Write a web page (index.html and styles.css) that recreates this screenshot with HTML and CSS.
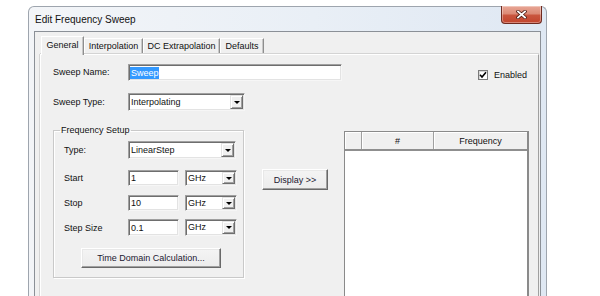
FILE: index.html
```html
<!DOCTYPE html>
<html>
<head>
<meta charset="utf-8">
<link rel="stylesheet" href="styles.css">
</head>
<body>
<div class="desk">
  <div class="window">
    <div class="titlebar">
      <span class="title">Edit Frequency Sweep</span>
      <div class="close">
        <svg width="11" height="9" viewBox="0 0 11 9">
          <path d="M2 1.5 L9 7.5 M9 1.5 L2 7.5" stroke="#4a1a12" stroke-width="3.4" stroke-linecap="square" fill="none"/>
          <path d="M2 1.5 L9 7.5 M9 1.5 L2 7.5" stroke="#ffffff" stroke-width="1.8" stroke-linecap="square" fill="none"/>
        </svg>
      </div>
    </div>
    <div class="client">
      <div class="tabs">
        <div class="tab sel t1">General</div>
        <div class="tab t2">Interpolation</div>
        <div class="tab t3">DC Extrapolation</div>
        <div class="tab t4">Defaults</div>
      </div>
      <div class="panel">
        <div class="row r1">
          <span class="lbl">Sweep Name:</span>
          <div class="edit name"><span class="hl">Sweep</span></div>
          <div class="check">
            <span class="box"><svg width="8" height="8" viewBox="0 0 8 8"><path d="M1 3.8 L3 6 L7 1.3" stroke="#000" stroke-width="1.6" fill="none"/></svg></span>
            <span class="ctext">Enabled</span>
          </div>
        </div>
        <div class="row r2">
          <span class="lbl">Sweep Type:</span>
          <div class="combo stype"><span class="val">Interpolating</span><span class="arrow"><i></i></span></div>
        </div>
        <div class="row r3">
          <fieldset class="group">
            <legend>Frequency Setup</legend>
            <div class="frow f1">
              <span class="flbl">Type:</span>
              <div class="combo ftype"><span class="val">LinearStep</span><span class="arrow"><i></i></span></div>
            </div>
            <div class="frow f2">
              <span class="flbl">Start</span>
              <div class="edit num"><span class="val">1</span></div>
              <div class="combo unit"><span class="val">GHz</span><span class="arrow"><i></i></span></div>
            </div>
            <div class="frow f3">
              <span class="flbl">Stop</span>
              <div class="edit num"><span class="val">10</span></div>
              <div class="combo unit"><span class="val">GHz</span><span class="arrow"><i></i></span></div>
            </div>
            <div class="frow f4">
              <span class="flbl">Step Size</span>
              <div class="edit num"><span class="val">0.1</span></div>
              <div class="combo unit"><span class="val">GHz</span><span class="arrow"><i></i></span></div>
            </div>
            <div class="btn tdc">Time Domain Calculation...</div>
          </fieldset>
          <div class="btn display">Display &gt;&gt;</div>
          <div class="grid">
            <div class="ghead">
              <div class="hc c0"></div>
              <div class="hc c1">#</div>
              <div class="hc c2">Frequency</div>
            </div>
          </div>
        </div>
      </div>
    </div>
  </div>
</div>
</body>
</html>
```
FILE: styles.css
```css
html, body {
  margin: 0;
  padding: 0;
  background: #ffffff;
}
body {
  font-family: "Liberation Sans", Arial, sans-serif;
  font-size: 9px;
  color: #000;
}
.desk {
  height: 296px;
  overflow: hidden;
  padding: 6px 0 0 28px;
  box-sizing: border-box;
}
.window {
  width: 519px;
  height: 320px;
  box-sizing: border-box;
  border: 1px solid #9ea5ae;
  border-bottom: none;
  border-radius: 6px 6px 0 0;
  background: linear-gradient(90deg, #f3f5f8 0%, #e9eff6 55%, #dfe8f3 100%);
  padding: 0 5px;
  display: flex;
  flex-direction: column;
}
.titlebar {
  height: 24px;
  flex: none;
  position: relative;
  display: flex;
  align-items: center;
  padding-left: 1px;
}
.title {
  font-size: 10px;
  color: #111;
  padding-top: 1px;
}
.close {
  position: absolute;
  top: -1px;
  right: -1px;
  width: 41px;
  height: 18px;
  box-sizing: border-box;
  border: 1px solid #6e2a20;
  border-top: none;
  border-radius: 0 0 4px 4px;
  background: linear-gradient(#e8a796 0%, #dc8a76 45%, #c9553e 55%, #c2452e 100%);
  box-shadow: inset 0 0 0 1px rgba(255,255,255,0.35);
  display: flex;
  align-items: center;
  justify-content: center;
}
.client {
  flex: 1;
  background: #f0f0f0;
  border: 1px solid #8b9097;
  border-bottom: none;
  padding-top: 4px;
  display: flex;
  flex-direction: column;
}
.tabs {
  display: flex;
  align-items: flex-end;
  height: 18px;
  flex: none;
  margin-left: 6px;
}
.tab {
  height: 16px;
  box-sizing: border-box;
  border-top: 1px solid #ffffff;
  border-left: 1px solid #ffffff;
  border-right: 1px solid #8e8e8e;
  box-shadow: inset -1px 0 0 #c8c8c8;
  background: #f0f0f0;
  text-align: center;
  line-height: 14px;
  color: #111;
}
.tab.sel {
  height: 19px;
  margin-bottom: -1px;
  position: relative;
  z-index: 1;
  line-height: 16px;
}
.t1 { width: 43px; }
.t2 { width: 59px; }
.t3 { width: 77px; }
.t4 { width: 44px; }
.panel {
  flex: 1;
  margin-left: 5px;
  width: 499px;
  box-sizing: border-box;
  border-top: 1px solid #ffffff;
  border-left: 1px solid #ffffff;
  border-right: 1px solid #a0a0a0;
  box-shadow: 0 -1px 0 #d4d4d4, -1px 0 0 #d4d4d4;
  padding-left: 12px;
}
.row {
  display: flex;
  align-items: center;
}
.r1 { margin-top: 9px; height: 17px; align-items: flex-start; }
.r2 { margin-top: 12px; height: 18px; }
.r3 { margin-top: 13px; align-items: flex-start; }
.lbl {
  width: 75px;
  line-height: 17px;
  color: #111;
}
.edit {
  background: #fff;
  box-sizing: border-box;
  border: 1px solid;
  border-color: #a0a0a0 #f6f6f6 #f6f6f6 #a0a0a0;
  box-shadow: inset 1px 1px 0 #6e6e6e, inset -1px -1px 0 #e3e3e3;
  display: flex;
  align-items: center;
  overflow: hidden;
}
.edit.name {
  width: 214px;
  height: 17px;
  padding-left: 1px;
}
.hl {
  background: #3399ff;
  color: #fff;
  line-height: 12px;
  padding: 0 0 0 1px;
}
.check {
  margin-left: 136px;
  margin-top: 6px;
  display: flex;
  align-items: center;
}
.box {
  width: 10px;
  height: 10px;
  box-sizing: border-box;
  border: 1px solid #7a7a7a;
  background: #fff;
  box-shadow: inset 1px 1px 0 #d8d8d8;
  display: flex;
  align-items: center;
  justify-content: center;
}
.ctext {
  margin-left: 6px;
  color: #111;
}
.combo {
  background: #fff;
  box-sizing: border-box;
  border: 1px solid;
  border-color: #a0a0a0 #f6f6f6 #f6f6f6 #a0a0a0;
  box-shadow: inset 1px 1px 0 #6e6e6e, inset -1px -1px 0 #e3e3e3;
  display: flex;
  align-items: stretch;
  padding: 1px;
}
.combo .val {
  flex: 1;
  padding-left: 1px;
  line-height: 13px;
  display: flex;
  align-items: center;
  color: #111;
}
.arrow {
  width: 13px;
  box-sizing: border-box;
  background: #f0f0f0;
  border: 1px solid;
  border-color: #e3e3e3 #6e6e6e #6e6e6e #e3e3e3;
  box-shadow: inset 1px 1px 0 #fff, inset -1px -1px 0 #a0a0a0;
  display: flex;
  align-items: center;
  justify-content: center;
}
.arrow i {
  width: 0;
  height: 0;
  border-left: 3px solid transparent;
  border-right: 3px solid transparent;
  border-top: 3px solid #000;
}
.stype { width: 117px; height: 18px; }
.group {
  margin: 0;
  width: 191px;
  min-width: 0;
  box-sizing: border-box;
  border: 1px solid #c9c9c9;
  box-shadow: inset 1px 1px 0 #fff, 1px 1px 0 #fff;
  padding: 5px 0 9px 10px;
}
.group legend {
  padding: 0 1px;
  margin-left: -4px;
  line-height: 12px;
  font-size: 9px;
  color: #111;
}
.frow {
  display: flex;
  align-items: center;
  height: 16px;
}
.f1 { height: 18px; }
.f2 { margin-top: 11px; }
.f3 { margin-top: 9px; }
.f4 { margin-top: 8px; height: 17px; }
.flbl {
  width: 64px;
  color: #111;
}
.ftype { width: 108px; height: 18px; }
.edit.num {
  width: 51px;
  height: 100%;
  padding-left: 2px;
}
.edit.num .val { line-height: 12px; color: #111; }
.unit {
  width: 52px;
  height: 100%;
  margin-left: 6px;
}
.btn {
  box-sizing: border-box;
  background: linear-gradient(#f4f4f4, #ececec);
  border: 1px solid;
  border-color: #ffffff #696969 #696969 #ffffff;
  box-shadow: inset -1px -1px 0 #a0a0a0, inset 1px 1px 0 #e8e8e8;
  display: flex;
  align-items: center;
  justify-content: center;
  color: #1b1830;
}
.tdc {
  margin-top: 12px;
  margin-left: 17px;
  width: 140px;
  height: 20px;
}
.display {
  margin-left: 18px;
  margin-top: 45px;
  width: 66px;
  height: 21px;
}
.grid {
  margin-left: 16px;
  margin-top: 7px;
  width: 185px;
  height: 200px;
  box-sizing: border-box;
  background: #fff;
  border: 1px solid #8a8a8a;
  border-right: 2px solid #8a8a8a;
}
.ghead {
  display: flex;
  height: 17px;
  border-bottom: 2px solid #8f8f8f;
  background: #f0f0f0;
}
.hc {
  box-sizing: border-box;
  border-right: 1px solid #a0a0a0;
  box-shadow: inset 1px 1px 0 #fff;
  display: flex;
  align-items: center;
  justify-content: center;
  color: #111;
}
.c0 { width: 17px; }
.c1 { width: 72px; }
.c2 { flex: 1; border-right: none; }
```
